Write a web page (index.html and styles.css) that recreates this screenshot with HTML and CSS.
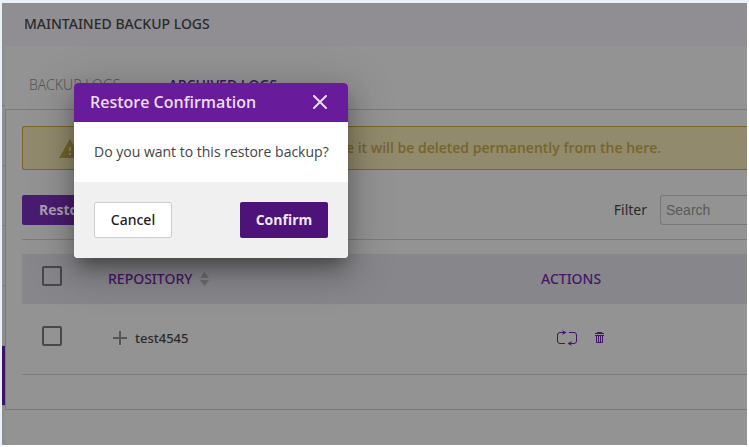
FILE: index.html
```html
<!DOCTYPE html>
<html lang="en">
<head>
<meta charset="utf-8">
<title>Maintained Backup Logs</title>
<link rel="stylesheet" href="styles.css">
</head>
<body>
<div class="app">
  <div class="rail">
    <span class="rail-item"></span>
    <span class="rail-item"></span>
    <span class="rail-item"></span>
    <span class="rail-item"></span>
    <span class="rail-item"></span>
    <span class="rail-item rail-active"></span>
  </div>
  <main class="main">
    <header class="page-head"><h1>MAINTAINED BACKUP LOGS</h1></header>
    <nav class="tabs">
      <a href="#backup" class="tab">BACKUP LOGS</a>
      <a href="#archived" class="tab tab-active">ARCHIVED LOGS</a>
    </nav>
    <section class="panel">
      <div class="alert">
        <svg class="warn" viewBox="0 0 22 19" width="22" height="19"><path fill="currentColor" fill-rule="evenodd" d="M11 0 22 19H0ZM10 8v4h2V8ZM10 14v2h2v-2Z"/></svg>
        <p>e it will be deleted permanently from the here.</p>
      </div>
      <div class="toolbar">
        <button class="restore" type="button">Restore</button>
        <div class="filter">
          <label for="search">Filter</label>
          <input id="search" type="text" placeholder="Search">
        </div>
      </div>
      <table class="logs">
        <thead>
          <tr>
            <th class="col-check"><input type="checkbox" aria-label="Select all"></th>
            <th class="col-repo"><span class="cell">REPOSITORY
              <svg viewBox="0 0 9 14" width="9" height="14"><path fill="#6c6c6c" d="M4.500 0 9 6H0ZM0 8H9L4.500 14Z"/></svg></span></th>
            <th>ACTIONS</th>
          </tr>
        </thead>
        <tbody>
          <tr>
            <td class="col-check"><input type="checkbox" aria-label="Select test4545"></td>
            <td class="col-repo"><span class="cell cell-name">
              <svg viewBox="0 0 14 14" width="14" height="14"><path stroke="#555" stroke-width="2" d="M7 0V14M0 7H14"/></svg>test4545</span></td>
            <td><span class="actions">
              <button type="button" aria-label="Restore test4545"><svg viewBox="0 0 20 16" width="20" height="16" fill="none" stroke="currentColor"><path d="M8 13.500H3Q.5 13.500 .5 11V5Q.5 2.500 3 2.500H8M12 2.500H17Q19.500 2.500 19.500 5V11Q19.500 13.500 17 13.500H12"/><path fill="currentColor" stroke="none" d="M5 0 9.500 2.500 5 5 6.500 2.500ZM15 11 10.500 13.500 15 16 13.500 13.500Z"/></svg></button>
              <button type="button" aria-label="Delete test4545"><svg viewBox="0 0 9 11" width="9" height="11" fill="none" stroke="currentColor"><path d="M2 .5H7M0 1.500H9M0 3.500H9M1.500 4V10.500H7.500V4M3.500 4V10M5.500 4V10"/></svg></button>
            </span></td>
          </tr>
        </tbody>
      </table>
    </section>
  </main>
</div>
<div class="modal" role="dialog" aria-labelledby="modal-title">
  <div class="modal-head">
    <h2 id="modal-title">Restore Confirmation</h2>
    <button type="button" aria-label="Close"><svg viewBox="0 0 14 14" width="14" height="14"><path stroke="currentColor" stroke-width="2" stroke-linecap="round" d="M1 1 13 13M13 1 1 13"/></svg></button>
  </div>
  <p class="modal-body">Do you want to this restore backup?</p>
  <div class="modal-foot">
    <button type="button" class="cancel">Cancel</button>
    <button type="button" class="confirm">Confirm</button>
  </div>
</div>
</body>
</html>
```
FILE: styles.css
```css
* { box-sizing: border-box; }
body {
  margin: 0;
  padding: 3px 2px 2px;
  background: linear-gradient(90deg, #e9f0fa 2px, transparent 2px), linear-gradient(#e9f0fa 3px, #fff 3px);
  font: 14px/20px "Open Sans", sans-serif;
  color: #2a2a2c;
}
h1, h2, p { margin: 0; }
button, input { font: inherit; margin: 0; }
button { padding: 0; border: 0; background: none; cursor: pointer; }
svg { display: block; flex: none; }

.app { display: flex; min-height: calc(100vh - 5px); background: #939393; overflow: hidden; }
.rail { width: 3px; flex: none; padding-top: 43px; background: #8d8e8e; }
.rail-item { display: block; height: 60px; border-bottom: 1px solid #808080; }
.rail-active { background: #3e1263; }
.main { flex: 1; min-width: 0; }
.page-head { padding: 11px 19px 12px; background: #908e93; }
h1 { font-size: 14px; font-weight: 500; line-height: 20px; }
h1, th, label, .cell-name { font-family: "Noto Sans", sans-serif; }

.tabs { display: flex; gap: 48px; padding: 29px 24px 14px; }
.tab { color: #555; font-family: "Noto Sans", sans-serif; font-weight: 300; text-decoration: none; }
.tab-active { color: #421465; font-family: "Open Sans", sans-serif; font-weight: 600; }

.panel { padding: 16px 0 34px 16px; border: 1px solid #7b7b7b; border-right: 0; }
.alert {
  display: flex;
  align-items: center;
  height: 44px;
  padding-left: 36px;
  border: 1px solid #7b662b;
  border-right: 0;
  border-radius: 3px 0 0 3px;
  background: #928a6c;
  color: #76642c;
  font-weight: 600;
}
.alert p { margin-left: 265px; white-space: nowrap; }
.toolbar {
  display: flex;
  justify-content: space-between;
  padding: 25px 0 14px;
  border-bottom: 1px solid #7b7b7b;
}
.restore { width: 88px; height: 30px; border-radius: 2px; background: #4a1c71; color: #a9a0b0; font-weight: 700; }
.filter { display: flex; align-items: center; gap: 13px; }
.filter input {
  width: 87px;
  height: 30px;
  padding: 0 5px;
  border: 1px solid #777;
  border-right: 0;
  border-radius: 3px 0 0 3px;
  background: transparent;
  font-family: "Liberation Sans", sans-serif;
}
.filter input::placeholder { color: #5a5a5a; }

.logs { width: 100%; margin-top: 14px; border-collapse: collapse; table-layout: fixed; }
.logs th, .logs td { padding: 0; text-align: left; }
.logs th { height: 50px; background: #87868b; color: #471568; font-weight: 500; }
.logs td { height: 70px; padding-bottom: 2px; border-bottom: 1px solid #7d7d7d; font-size: 13px; }
.logs .col-check { width: 86px; padding: 0 0 6px 20px; }
.logs .col-repo { width: 433px; }
.logs input {
  display: block;
  appearance: none;
  width: 20px;
  height: 20px;
  border: 2px solid #484848;
  border-radius: 2px;
}
.cell { display: flex; align-items: center; gap: 8px; }
.cell-name { padding-left: 5px; font-weight: 500; }
.actions { display: flex; align-items: center; gap: 18px; padding-left: 16px; color: #421465; }
.actions button { color: inherit; }

.modal {
  position: absolute;
  left: 74px;
  top: 83px;
  width: 274px;
  border-radius: 4px;
  overflow: hidden;
  background: #fff;
  box-shadow: 0 11px 15px -7px rgba(0, 0, 0, .3), 0 12px 24px 2px rgba(0, 0, 0, .2), 0 9px 46px 8px rgba(0, 0, 0, .14);
}
.modal-head {
  display: flex;
  align-items: center;
  justify-content: space-between;
  height: 39px;
  padding: 0 21px 1px 16px;
  background: #681b9a;
  color: #eadcf2;
}
.modal-head button { color: inherit; }
h2 { font-size: 16px; font-weight: 600; line-height: 20px; }
.modal-body { padding: 20px; color: #444; white-space: nowrap; }
.modal-foot { display: flex; justify-content: space-between; padding: 20px; background: #f0f0f0; }
.modal-foot button { height: 36px; border-radius: 2px; }
.cancel { width: 78px; border: 1px solid #ccc; background: #fff; color: #222; font-family: "Noto Sans", sans-serif; font-weight: 500; }
.confirm { width: 88px; background: #4d1378; color: #f0e6f6; font-weight: 700; }
```
